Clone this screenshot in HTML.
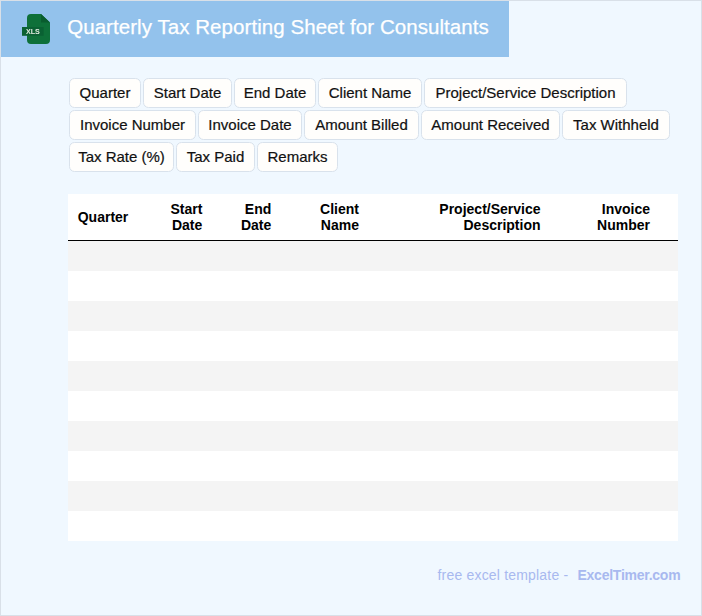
<!DOCTYPE html>
<html><head><meta charset="utf-8">
<style>
*{box-sizing:border-box;margin:0;padding:0}
html,body{width:702px;height:616px;overflow:hidden}
body{position:relative;background:#f0f8ff;font-family:"Liberation Sans",sans-serif;border:1px solid #d9e0e8}
.hdr{position:absolute;left:0;top:0;width:508px;height:56px;background:#93c2ec}
.title{position:absolute;left:66.2px;top:14px;font-size:20.5px;line-height:24px;color:#fff;letter-spacing:0.06px;-webkit-text-stroke:0.25px #fff;white-space:nowrap}
.icon{position:absolute;left:19px;top:11px;will-change:transform}
.tag{position:absolute;height:30px;border:1px solid #d9e2ec;border-radius:5.5px;background:#fffefc;color:#111;-webkit-text-stroke:0.2px #111;font-size:15px;line-height:28px;text-align:center;white-space:nowrap}
.tbl{position:absolute;left:67px;top:193px;width:610px;height:347px;background:#fff}
.th{position:absolute;font-size:14px;font-weight:bold;line-height:16px;color:#000;text-align:right;white-space:nowrap}
.line{position:absolute;left:0;top:46px;width:610px;height:1px;background:#000}
.row{position:absolute;left:0;width:610px;height:30px}
.g{background:#f4f4f4}
.foot{position:absolute;top:566px;font-size:14px;line-height:18px;color:#a8b9ef;white-space:nowrap}
</style></head><body>
<div class="hdr">
  <svg class="icon" width="36" height="36" viewBox="0 0 36 36">
    <path d="M10 2 H21 L30 10.6 V28 A4 4 0 0 1 26 32 H11 A4 4 0 0 1 7 28 V6 A4 4 0 0 1 11 2 Z" fill="#0e7039"/>
    <path d="M21 2 V10.6 H30 Z" fill="#095c2e"/>
    <rect x="2" y="15" width="21.6" height="8.8" fill="#0a6133"/>
    <text x="12.9" y="22" font-family="Liberation Sans" font-size="8" font-weight="bold" fill="#e4ede2" text-anchor="middle" textLength="14" lengthAdjust="spacingAndGlyphs">XLS</text>
  </svg>
  <div class="title">Quarterly Tax Reporting Sheet for Consultants</div>
</div>

<div class="tag" style="left:68px;top:77px;width:72px">Quarter</div>
<div class="tag" style="left:142px;top:77px;width:89px">Start Date</div>
<div class="tag" style="left:233px;top:77px;width:82px">End Date</div>
<div class="tag" style="left:317px;top:77px;width:104px">Client Name</div>
<div class="tag" style="left:423px;top:77px;width:203px">Project/Service Description</div>

<div class="tag" style="left:68px;top:109px;width:127px">Invoice Number</div>
<div class="tag" style="left:197px;top:109px;width:104px">Invoice Date</div>
<div class="tag" style="left:303px;top:109px;width:115px">Amount Billed</div>
<div class="tag" style="left:420px;top:109px;width:139px">Amount Received</div>
<div class="tag" style="left:561px;top:109px;width:108px">Tax Withheld</div>

<div class="tag" style="left:68px;top:141px;width:105px">Tax Rate (%)</div>
<div class="tag" style="left:175px;top:141px;width:79px">Tax Paid</div>
<div class="tag" style="left:256px;top:141px;width:81px">Remarks</div>

<div class="tbl">
  <div class="th" style="right:549.7px;top:15px">Quarter</div>
  <div class="th" style="right:475.7px;top:7px">Start<br>Date</div>
  <div class="th" style="right:406.7px;top:7px">End<br>Date</div>
  <div class="th" style="right:319px;top:7px">Client<br>Name</div>
  <div class="th" style="right:137.5px;top:7px">Project/Service<br>Description</div>
  <div class="th" style="right:28px;top:7px">Invoice<br>Number</div>
  <div class="line"></div>
  <div class="row g" style="top:47px"></div>
  <div class="row g" style="top:107px"></div>
  <div class="row g" style="top:167px"></div>
  <div class="row g" style="top:227px"></div>
  <div class="row g" style="top:287px"></div>
</div>

<div class="foot" style="left:436.5px;top:565px;letter-spacing:0.19px">free excel template -</div>
<div class="foot" style="left:576.5px;top:565px;font-weight:bold;letter-spacing:-0.25px">ExcelTimer.com</div>
</body></html>
